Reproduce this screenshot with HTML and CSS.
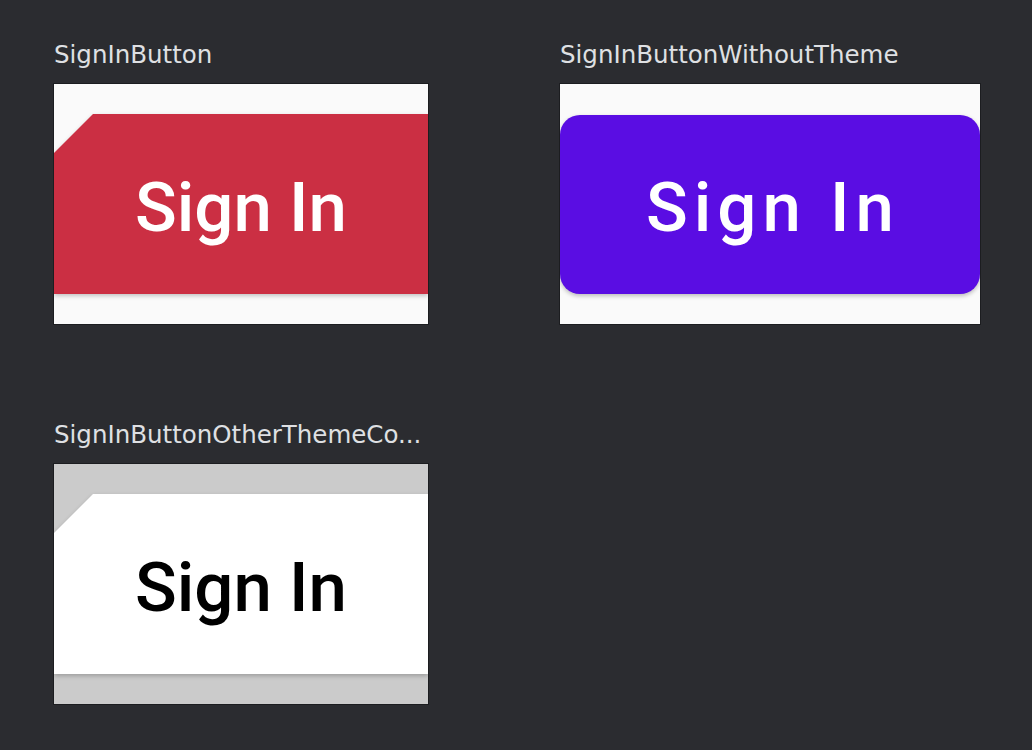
FILE: index.html
```html
<!DOCTYPE html>
<html lang="en">
<head>
    <meta charset="UTF-8">
    <title>Previews</title>
    <link rel="stylesheet" href="styles.css">
</head>
<body>
    <div class="grid">
        <div class="preview">
            <div class="label">SignInButton</div>
            <div class="frame narrow">
                <div class="cut-wrap">
                    <div class="cut red">Sign In</div>
                </div>
            </div>
        </div>

        <div class="preview">
            <div class="label">SignInButtonWithoutTheme</div>
            <div class="frame wide">
                <div class="pill">Sign In</div>
            </div>
        </div>

        <div class="preview">
            <div class="label" title="SignInButtonOtherThemeColors">SignInButtonOtherThemeCo...</div>
            <div class="frame narrow gray">
                <div class="cut-wrap">
                    <div class="cut white">Sign In</div>
                </div>
            </div>
        </div>
    </div>
</body>
</html>
```

FILE: styles.css
```css
body {
    margin: 0;
    padding: 40px 0 0 53px;
    background-color: #2b2c30;
    font-family: "DejaVu Sans", sans-serif;
}

.grid {
    display: grid;
    grid-template-columns: 376px 422px;
    column-gap: 130px;
    row-gap: 95px;
    align-items: start;
}

.label {
    height: 30px;
    margin-bottom: 13px;
    padding-left: 1px;
    font-size: 24.5px;
    line-height: 30px;
    color: #dfe0e3;
    white-space: nowrap;
}

.frame {
    height: 240px;
    border: 1px solid #1c1d20;
    background-color: #fafafa;
    display: flex;
    align-items: center;
    overflow: hidden;
}

.frame.narrow {
    width: 374px;
}

.frame.wide {
    width: 420px;
}

.frame.gray {
    background-color: #cbcbcb;
}

.cut-wrap {
    width: 100%;
    filter: drop-shadow(0 2px 2px rgba(0, 0, 0, 0.22));
}

.cut {
    height: 180px;
    display: flex;
    align-items: center;
    justify-content: center;
    padding-top: 6px;
    box-sizing: border-box;
    font-family: Roboto, sans-serif;
    font-weight: 500;
    font-size: 69px;
    clip-path: polygon(39px 0, 100% 0, 100% 100%, 0 100%, 0 39px);
}

.cut.red {
    background-color: #cb2f43;
    color: #ffffff;
}

.cut.white {
    background-color: #ffffff;
    color: #000000;
}

.pill {
    width: 100%;
    height: 179px;
    margin-top: 1px;
    padding: 5px 0 0 6px;
    box-sizing: border-box;
    display: flex;
    align-items: center;
    justify-content: center;
    background-color: #5a0de3;
    color: #ffffff;
    border-radius: 20px;
    box-shadow: 0 2px 4px rgba(0, 0, 0, 0.25);
    font-family: Roboto, sans-serif;
    font-weight: 500;
    font-size: 69px;
    letter-spacing: 6px;
}
```
